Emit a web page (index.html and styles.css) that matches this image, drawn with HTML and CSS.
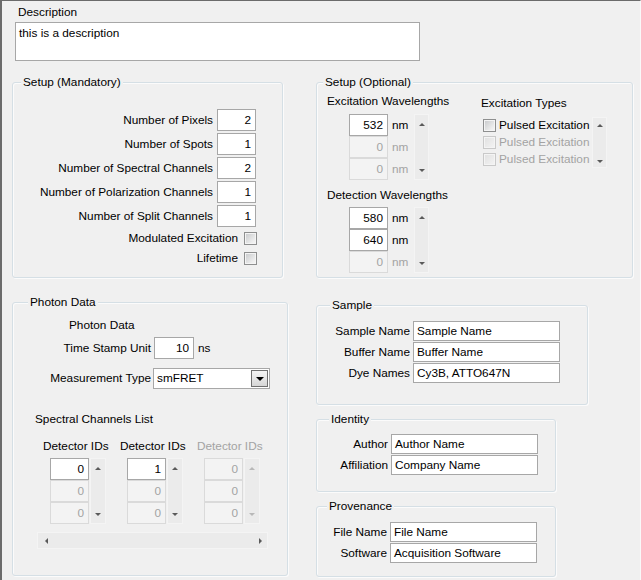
FILE: index.html
```html
<!DOCTYPE html>
<html>
<head>
<meta charset="utf-8">
<link rel="stylesheet" href="styles.css">
</head>
<body>
<div class="window">
  <section class="desc">
    <div class="desc-label">Description</div>
    <div class="textbox">this is a description</div>
  </section>

  <div class="row row-setup">
    <div class="group g-mand">
      <div class="legend lg-mand">Setup (Mandatory)</div>
      <div class="mand-form">
        <div class="frow"><span>Number of Pixels</span><div class="num">2</div></div>
        <div class="frow"><span>Number of Spots</span><div class="num">1</div></div>
        <div class="frow"><span>Number of Spectral Channels</span><div class="num">2</div></div>
        <div class="frow"><span>Number of Polarization Channels</span><div class="num">1</div></div>
        <div class="frow"><span>Number of Split Channels</span><div class="num">1</div></div>
        <div class="crow"><span>Modulated Excitation</span><div class="cb"></div></div>
        <div class="crow"><span>Lifetime</span><div class="cb"></div></div>
      </div>
    </div>

    <div class="group g-opt">
      <div class="legend lg-opt">Setup (Optional)</div>
      <div class="opt-body">
        <div class="opt-col1">
          <div class="lbl exc-lbl">Excitation Wavelengths</div>
          <div class="arr wl-arr">
            <div class="cells">
              <div class="acell"><div class="num">532</div><span class="unit">nm</span></div>
              <div class="acell dis"><div class="num">0</div><span class="unit">nm</span></div>
              <div class="acell dis"><div class="num">0</div><span class="unit">nm</span></div>
            </div>
            <div class="vscroll"><i class="up"></i><i class="down"></i></div>
          </div>
          <div class="lbl det-lbl">Detection Wavelengths</div>
          <div class="arr wl-arr det-arr">
            <div class="cells">
              <div class="acell"><div class="num">580</div><span class="unit">nm</span></div>
              <div class="acell"><div class="num">640</div><span class="unit">nm</span></div>
              <div class="acell dis"><div class="num">0</div><span class="unit">nm</span></div>
            </div>
            <div class="vscroll"><i class="up"></i><i class="down"></i></div>
          </div>
        </div>
        <div class="opt-col2">
          <div class="lbl types-lbl">Excitation Types</div>
          <div class="arr types-arr">
            <div class="checklist">
              <div class="citem"><div class="cb"></div><span>Pulsed Excitation</span></div>
              <div class="citem dis"><div class="cb"></div><span>Pulsed Excitation</span></div>
              <div class="citem dis"><div class="cb"></div><span>Pulsed Excitation</span></div>
            </div>
            <div class="vscroll small"><i class="up"></i><i class="down"></i></div>
          </div>
        </div>
      </div>
    </div>
  </div>

  <div class="row row-bottom">
    <div class="group g-photon">
      <div class="legend lg-photon">Photon Data</div>
      <div class="lbl pd-title">Photon Data</div>
      <div class="prow ts-row">
        <span class="plabel">Time Stamp Unit</span>
        <div class="num ts-num">10</div>
        <span class="unit">ns</span>
      </div>
      <div class="prow mt-row">
        <span class="plabel">Measurement Type</span>
        <div class="dropdown"><span>smFRET</span><div class="ddbtn"><i></i></div></div>
      </div>
      <div class="lbl scl-lbl">Spectral Channels List</div>
      <div class="det-cols">
        <div class="det-col">
          <div class="lbl">Detector IDs</div>
          <div class="arr det-id-arr">
            <div class="cells">
              <div class="acell"><div class="num">0</div></div>
              <div class="acell dis"><div class="num">0</div></div>
              <div class="acell dis"><div class="num">0</div></div>
            </div>
            <div class="vscroll wide"><i class="up"></i><i class="down"></i></div>
          </div>
        </div>
        <div class="det-col">
          <div class="lbl">Detector IDs</div>
          <div class="arr det-id-arr">
            <div class="cells">
              <div class="acell"><div class="num">1</div></div>
              <div class="acell dis"><div class="num">0</div></div>
              <div class="acell dis"><div class="num">0</div></div>
            </div>
            <div class="vscroll wide"><i class="up"></i><i class="down"></i></div>
          </div>
        </div>
        <div class="det-col off">
          <div class="lbl">Detector IDs</div>
          <div class="arr det-id-arr">
            <div class="cells">
              <div class="acell dis"><div class="num">0</div></div>
              <div class="acell dis"><div class="num">0</div></div>
              <div class="acell dis"><div class="num">0</div></div>
            </div>
            <div class="vscroll wide off"><i class="up"></i><i class="down"></i></div>
          </div>
        </div>
      </div>
      <div class="hscroll"><i class="left"></i><i class="right"></i></div>
    </div>

    <div class="col-right">
      <div class="group g-sample">
        <div class="legend lg-sample">Sample</div>
        <div class="sform">
          <div class="srow"><span class="slabel">Sample Name</span><div class="str">Sample Name</div></div>
          <div class="srow"><span class="slabel">Buffer Name</span><div class="str">Buffer Name</div></div>
          <div class="srow"><span class="slabel">Dye Names</span><div class="str">Cy3B, ATTO647N</div></div>
        </div>
      </div>
      <div class="group g-identity">
        <div class="legend lg-identity">Identity</div>
        <div class="sform">
          <div class="srow"><span class="slabel">Author</span><div class="str">Author Name</div></div>
          <div class="srow"><span class="slabel">Affiliation</span><div class="str">Company Name</div></div>
        </div>
      </div>
      <div class="group g-prov">
        <div class="legend lg-prov">Provenance</div>
        <div class="sform">
          <div class="srow"><span class="slabel">File Name</span><div class="str">File Name</div></div>
          <div class="srow"><span class="slabel">Software</span><div class="str">Acquisition Software</div></div>
        </div>
      </div>
    </div>
  </div>
</div>
</body>
</html>
```
FILE: styles.css
```css
* { box-sizing: border-box; }
body {
  margin: 0;
  background: #f0f0f0;
  font: 11.8px/15px "Liberation Sans", Arial, sans-serif;
  color: #000;
}
.window {
  width: 641px;
  height: 580px;
  border-top: 1px solid #6b6b6b;
  border-left: 2px solid #6b6b6b;
  border-right: 1px solid #f9f9f9;
  overflow: hidden;
  white-space: nowrap;
}

/* description */
.desc { padding: 4px 0 0 13px; }
.desc-label { margin-left: 3px; height: 15px; }
.textbox {
  margin-top: 2px;
  width: 405px;
  height: 39px;
  border: 1px solid #a7a7a7;
  background: #fff;
  padding: 3px 3px;
}

/* rows */
.row { display: flex; align-items: flex-start; padding-left: 10px; }
.row-setup { margin-top: 21px; gap: 33px; }
.row-bottom { margin-top: 24px; gap: 28px; }

/* group boxes */
.group {
  border: 1px solid #d5dfe5;
  border-radius: 3px;
  box-shadow: inset 1px 1px 0 #fbfbfb, 1px 1px 0 #fbfbfb;
}
.legend {
  width: max-content;
  margin-top: -8px;
  padding: 0 2px;
  height: 15px;
  background: #f0f0f0;
}
.lbl { height: 15px; width: max-content; }

.g-mand { width: 271px; height: 196px; }
.lg-mand { margin-left: 8px; }
.mand-form {
  margin-top: 19px;
  padding-right: 26px;
  display: flex;
  flex-direction: column;
  align-items: flex-end;
  gap: 2px;
}
.frow { display: flex; align-items: center; gap: 4px; height: 22px; }
.crow { display: flex; align-items: center; gap: 6px; height: 18px; margin-right: -1px; }

.num {
  width: 39px;
  height: 22px;
  flex: none;
  border: 1px solid #a7a7a7;
  background: #fff;
  text-align: right;
  padding-right: 4px;
  line-height: 20px;
}

.cb {
  width: 13px;
  height: 13px;
  flex: none;
  border: 1px solid #8e8f8f;
  background: linear-gradient(135deg, #c6c8ca 0%, #eeeeee 75%, #f6f6f6 100%);
  box-shadow: inset 0 0 0 1px #f4f4f4;
}

/* optional setup */
.g-opt { width: 317px; height: 196px; }
.lg-opt { margin-left: 6px; }
.opt-body { display: flex; padding-left: 10px; }
.opt-col1 { width: 154px; flex: none; }
.exc-lbl { margin-top: 4px; }
.det-lbl { margin-top: 8px; }
.arr { display: flex; align-items: flex-start; }
.wl-arr { margin-top: 5px; margin-left: 22px; gap: 2px; }
.det-arr { margin-top: 4px; }
.cells { display: flex; flex-direction: column; flex: none; }
.wl-arr .cells { width: 63px; }
.acell { display: flex; align-items: center; height: 22px; }
.unit { margin-left: 4px; }
.acell.dis .num {
  background: #f3f3f3;
  border-color: #dadada;
  color: #a3a3a3;
}
.acell.dis .unit { color: #a3a3a3; }

.vscroll {
  width: 15px;
  height: 66px;
  flex: none;
  background: #ebebeb;
  border: 1px solid #f4f4f4;
  display: flex;
  flex-direction: column;
  align-items: center;
  justify-content: space-between;
  padding: 8px 0 7px;
}
.vscroll i, .hscroll i { display: block; width: 0; height: 0; }
.vscroll .up {
  border-left: 3px solid transparent;
  border-right: 3px solid transparent;
  border-bottom: 3px solid #5a5a5a;
}
.vscroll .down {
  border-left: 3px solid transparent;
  border-right: 3px solid transparent;
  border-top: 3px solid #5a5a5a;
}
.vscroll.small { height: 51px; padding: 6px 0 4px; }
.vscroll.wide { width: 16px; }
.vscroll.off .up { border-bottom-color: #b8b8b8; }
.vscroll.off .down { border-top-color: #b8b8b8; }

.types-lbl { margin-top: 6px; }
.types-arr { margin-top: 6px; margin-left: 2px; gap: 2px; }
.checklist { width: 107px; flex: none; display: flex; flex-direction: column; }
.citem { display: flex; align-items: center; gap: 3px; height: 17px; }
.citem.dis span { color: #a3a3a3; }
.citem.dis .cb {
  border-color: #c9c9c9;
  background: linear-gradient(135deg, #e0e0e0, #f4f4f4);
}

/* photon data */
.g-photon { width: 276px; height: 274px; flex: none; }
.lg-photon { margin-left: 15px; }
.pd-title { margin-top: 8px; margin-left: 56px; }
.prow { display: flex; align-items: center; }
.plabel { width: 138px; text-align: right; }
.ts-row { margin-top: 4px; height: 22px; }
.ts-num { margin-left: 3px; width: 40px; }
.mt-row { margin-top: 9px; height: 21px; }
.dropdown {
  margin-left: 2px;
  width: 117px;
  height: 21px;
  border: 1px solid #a7a7a7;
  background: #fff;
  display: flex;
  align-items: center;
  justify-content: space-between;
  padding: 0 1px 0 3px;
}
.ddbtn {
  width: 17px;
  height: 17px;
  border: 1px solid #707070;
  background: linear-gradient(#f4f4f4 0%, #e6e6e6 50%, #d6d6d6 100%);
  display: flex;
  align-items: center;
  justify-content: center;
}
.ddbtn i {
  display: block;
  width: 0;
  height: 0;
  border-left: 4px solid transparent;
  border-right: 4px solid transparent;
  border-top: 4px solid #000;
  margin-top: 1px;
}
.scl-lbl { margin-top: 23px; margin-left: 22px; }
.det-cols { display: flex; margin-top: 12px; margin-left: 30px; }
.det-col { width: 77px; flex: none; }
.det-col.off .lbl { color: #a3a3a3; }
.det-id-arr { margin-top: 4px; margin-left: 7px; gap: 1px; }
.hscroll {
  margin-top: 8px;
  margin-left: 24px;
  width: 231px;
  height: 17px;
  background: #ebebeb;
  border: 1px solid #f4f4f4;
  display: flex;
  align-items: center;
  justify-content: space-between;
  padding: 0 5px 0 7px;
}
.hscroll .left {
  border-top: 3px solid transparent;
  border-bottom: 3px solid transparent;
  border-right: 3px solid #5a5a5a;
}
.hscroll .right {
  border-top: 3px solid transparent;
  border-bottom: 3px solid transparent;
  border-left: 3px solid #5a5a5a;
}

/* right column */
.col-right { margin-top: 3px; display: flex; flex-direction: column; gap: 14px; }
.g-sample { width: 272px; height: 100px; }
.g-identity { width: 240px; height: 73px; }
.g-prov { width: 240px; height: 71px; }
.lg-sample { margin-left: 13px; }
.lg-identity { margin-left: 12px; }
.lg-prov { margin-left: 10px; }
.sform { display: flex; flex-direction: column; gap: 1px; margin-top: 8px; }
.g-identity .sform { margin-top: 7px; }
.srow { display: flex; align-items: center; height: 20px; }
.slabel { text-align: right; width: 93px; flex: none; }
.g-identity .slabel { width: 71px; }
.g-prov .slabel { width: 70px; }
.str {
  margin-left: 3px;
  width: 147px;
  height: 20px;
  flex: none;
  border: 1px solid #a7a7a7;
  background: #fff;
  padding-left: 3px;
  line-height: 18px;
}
```
